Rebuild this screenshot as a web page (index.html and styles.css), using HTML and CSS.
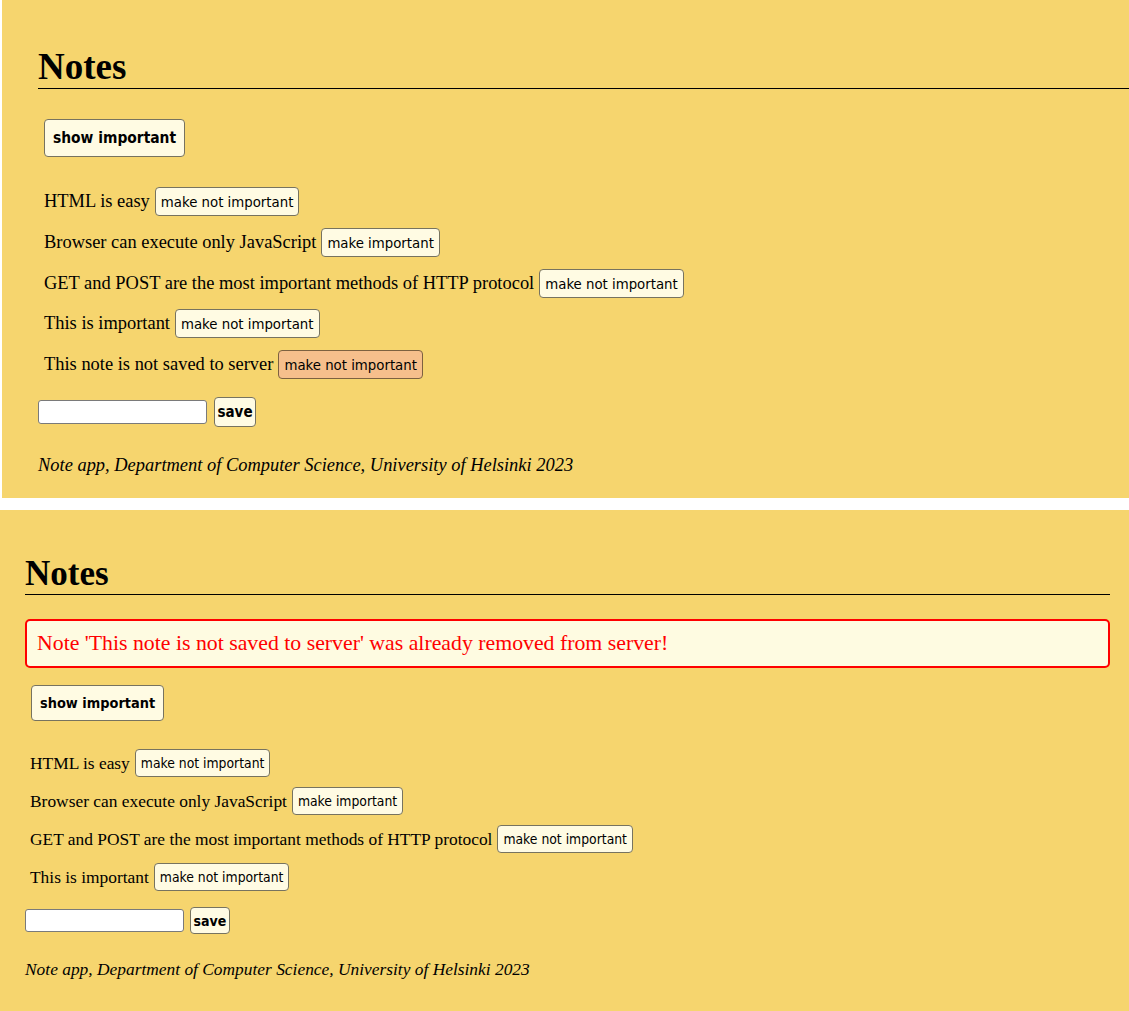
FILE: index.html
```html
<!DOCTYPE html>
<html lang="en">
<head>
<meta charset="utf-8">
<title>Notes</title>
<link rel="stylesheet" href="styles.css">
</head>
<body>
<div class="panel panel-top">
  <div class="app">
    <h1 class="title">Notes</h1>
    <div class="toolbar"><button class="btn btn-show">show important</button></div>
    <ul class="notes">
      <li class="note"><span>HTML is easy</span><button class="btn btn-toggle">make not important</button></li>
      <li class="note"><span>Browser can execute only JavaScript</span><button class="btn btn-toggle">make important</button></li>
      <li class="note"><span>GET and POST are the most important methods of HTTP protocol</span><button class="btn btn-toggle">make not important</button></li>
      <li class="note"><span>This is important</span><button class="btn btn-toggle">make not important</button></li>
      <li class="note"><span>This note is not saved to server</span><button class="btn btn-toggle btn-active">make not important</button></li>
    </ul>
    <form class="new-note"><input class="field" type="text"><button class="btn btn-save" type="button">save</button></form>
    <div class="footer"><em>Note app, Department of Computer Science, University of Helsinki 2023</em></div>
  </div>
</div>
<div class="panel panel-bottom">
  <div class="app">
    <h1 class="title">Notes</h1>
    <div class="error">Note 'This note is not saved to server' was already removed from server!</div>
    <div class="toolbar"><button class="btn btn-show">show important</button></div>
    <ul class="notes">
      <li class="note"><span>HTML is easy</span><button class="btn btn-toggle">make not important</button></li>
      <li class="note"><span>Browser can execute only JavaScript</span><button class="btn btn-toggle">make important</button></li>
      <li class="note"><span>GET and POST are the most important methods of HTTP protocol</span><button class="btn btn-toggle">make not important</button></li>
      <li class="note"><span>This is important</span><button class="btn btn-toggle">make not important</button></li>
    </ul>
    <form class="new-note"><input class="field" type="text"><button class="btn btn-save" type="button">save</button></form>
    <div class="footer"><em>Note app, Department of Computer Science, University of Helsinki 2023</em></div>
  </div>
</div>
</body>
</html>
```
FILE: styles.css
```css
html, body {
  margin: 0;
  padding: 0;
  background: #ffffff;
}

body {
  font-family: "Liberation Serif", "Times New Roman", serif;
  color: #000;
}

.panel {
  background: #f6d56e;
  overflow: hidden;
  box-sizing: border-box;
}

.title {
  margin: 0;
  font-weight: bold;
  border-bottom: 1px solid #000;
}

.toolbar {
  display: flex;
}

.btn {
  font-family: "DejaVu Sans Condensed", "DejaVu Sans", sans-serif;
  background: #fffbe3;
  color: #000;
  border: 1px solid #77735f;
  border-radius: 4px;
  box-sizing: border-box;
  padding: 0;
  display: inline-flex;
  align-items: center;
  justify-content: center;
}

.btn-show, .btn-save {
  font-weight: bold;
}

.btn-active {
  background: #f6bf8c;
  border-color: #7d6140;
}

.notes {
  list-style: none;
  margin: 0;
  display: flex;
  flex-direction: column;
}

.note {
  display: flex;
  align-items: center;
}

.new-note {
  display: flex;
  align-items: center;
  margin: 0;
}

.field {
  box-sizing: border-box;
  background: #fff;
  border: 1px solid #7a7a7a;
  border-radius: 3px;
  padding: 0;
  margin: 0;
}

.footer em {
  font-style: italic;
}

/* ---------- top panel ---------- */
.panel-top {
  margin-left: 2px;
  height: 498px;
  padding-left: 36px;
  font-size: 18.45px;
}

.panel-top .app {
  width: 1100px;
}

.panel-top .title {
  font-size: 37px;
  line-height: 42px;
  padding-top: 46px;
}

.panel-top .toolbar {
  margin-top: 30px;
  padding-left: 6px;
}

.panel-top .btn-show {
  height: 38px;
  padding: 0 8px;
  font-size: 15.4px;
}

.panel-top .notes {
  margin-top: 30px;
  padding-left: 6px;
  gap: 11.75px;
}

.panel-top .note {
  height: 29px;
  line-height: 29px;
}

.panel-top .btn-toggle {
  height: 29px;
  margin-left: 5px;
  padding: 0 5px;
  font-size: 14.8px;
}

.panel-top .new-note {
  margin-top: 17.5px;
  gap: 7px;
}

.panel-top .field {
  width: 169px;
  height: 24px;
}

.panel-top .btn-save {
  width: 42px;
  height: 30px;
  font-size: 15px;
}

.panel-top .footer {
  margin-top: 27px;
  line-height: 22px;
}

/* ---------- bottom panel ---------- */
.panel-bottom {
  margin-top: 12px;
  min-height: 501px;
  padding: 0 19px 0 25px;
  font-size: 17.4px;
}

.panel-bottom .title {
  font-size: 35px;
  line-height: 40px;
  padding-top: 44px;
}

.panel-bottom .error {
  margin-top: 24px;
  border: 2px solid #ff0000;
  border-radius: 5px;
  background: #fefbe1;
  color: #ff0000;
  font-size: 21.8px;
  line-height: 25px;
  padding: 10px 10px;
}

.panel-bottom .toolbar {
  margin-top: 17px;
  padding-left: 6px;
}

.panel-bottom .btn-show {
  height: 36px;
  padding: 0 8px;
  font-size: 14.4px;
}

.panel-bottom .notes {
  margin-top: 28px;
  padding-left: 5px;
  gap: 10px;
}

.panel-bottom .note {
  height: 28px;
  line-height: 28px;
}

.panel-bottom .btn-toggle {
  height: 28px;
  margin-left: 5px;
  padding: 0 5px;
  font-size: 13.8px;
}

.panel-bottom .new-note {
  margin-top: 16px;
  gap: 6px;
}

.panel-bottom .field {
  width: 159px;
  height: 23px;
}

.panel-bottom .btn-save {
  width: 40px;
  height: 27px;
  font-size: 14px;
}

.panel-bottom .footer {
  margin-top: 25px;
  line-height: 20px;
}
```
